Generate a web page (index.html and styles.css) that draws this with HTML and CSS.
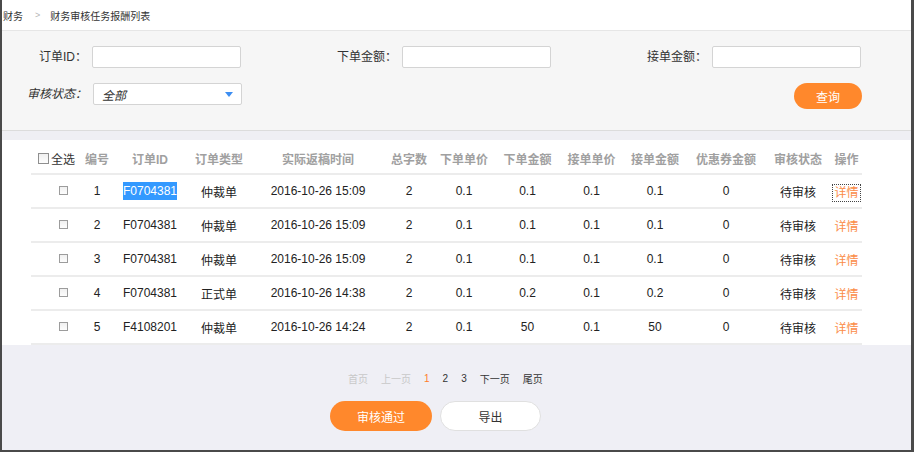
FILE: index.html
```html
<!DOCTYPE html>
<html lang="zh-CN">
<head>
<meta charset="utf-8">
<title>财务审核任务报酬列表</title>
<link rel="stylesheet" href="styles.css">
</head>
<body>
<div class="window">
  <div class="crumb">
    <span class="crumb-item">财务</span>
    <span class="crumb-sep">&gt;</span>
    <span class="crumb-item">财务审核任务报酬列表</span>
  </div>

  <div class="filter">
    <div class="field">
      <label class="label">订单ID：</label>
      <span class="input"></span>
    </div>
    <div class="field">
      <label class="label">下单金额：</label>
      <span class="input"></span>
    </div>
    <div class="field">
      <label class="label">接单金额：</label>
      <span class="input"></span>
    </div>
    <div class="field">
      <label class="label italic">审核状态：</label>
      <span class="select"><span class="select-text">全部</span><span class="caret"></span></span>
    </div>
    <div class="spacer"></div>
    <button class="btn-query">查询</button>
  </div>

  <div class="gap"></div>

  <div class="panel">
    <table class="grid">
      <colgroup>
        <col style="width:50px"><col style="width:32px"><col style="width:74px"><col style="width:64px">
        <col style="width:134px"><col style="width:48px"><col style="width:62px"><col style="width:65px">
        <col style="width:63px"><col style="width:64px"><col style="width:78px"><col style="width:66px"><col style="width:31px">
      </colgroup>
      <thead>
        <tr>
          <th class="all"><span class="cb cb-lg"></span><span class="all-text">全选</span></th>
          <th>编号</th><th>订单ID</th><th>订单类型</th><th>实际返稿时间</th><th>总字数</th>
          <th>下单单价</th><th>下单金额</th><th>接单单价</th><th>接单金额</th><th>优惠券金额</th><th>审核状态</th><th>操作</th>
        </tr>
      </thead>
      <tbody>
        <tr>
          <td class="cbcell"><span class="cb"></span></td><td>1</td><td><span class="sel">F0704381</span></td><td>仲裁单</td>
          <td>2016-10-26 15:09</td><td>2</td><td>0.1</td><td>0.1</td><td>0.1</td><td>0.1</td><td>0</td><td>待审核</td>
          <td><a class="detail focus">详情</a></td>
        </tr>
        <tr>
          <td class="cbcell"><span class="cb"></span></td><td>2</td><td>F0704381</td><td>仲裁单</td>
          <td>2016-10-26 15:09</td><td>2</td><td>0.1</td><td>0.1</td><td>0.1</td><td>0.1</td><td>0</td><td>待审核</td>
          <td><a class="detail">详情</a></td>
        </tr>
        <tr>
          <td class="cbcell"><span class="cb"></span></td><td>3</td><td>F0704381</td><td>仲裁单</td>
          <td>2016-10-26 15:09</td><td>2</td><td>0.1</td><td>0.1</td><td>0.1</td><td>0.1</td><td>0</td><td>待审核</td>
          <td><a class="detail">详情</a></td>
        </tr>
        <tr>
          <td class="cbcell"><span class="cb"></span></td><td>4</td><td>F0704381</td><td>正式单</td>
          <td>2016-10-26 14:38</td><td>2</td><td>0.1</td><td>0.2</td><td>0.1</td><td>0.2</td><td>0</td><td>待审核</td>
          <td><a class="detail">详情</a></td>
        </tr>
        <tr>
          <td class="cbcell"><span class="cb"></span></td><td>5</td><td>F4108201</td><td>仲裁单</td>
          <td>2016-10-26 14:24</td><td>2</td><td>0.1</td><td>50</td><td>0.1</td><td>50</td><td>0</td><td>待审核</td>
          <td><a class="detail">详情</a></td>
        </tr>
      </tbody>
    </table>
  </div>

  <div class="footer">
    <div class="pager">
      <span class="pg dim">首页</span>
      <span class="pg dim">上一页</span>
      <span class="pg cur">1</span>
      <span class="pg">2</span>
      <span class="pg">3</span>
      <span class="pg">下一页</span>
      <span class="pg">尾页</span>
    </div>
    <div class="actions">
      <button class="btn-pass">审核通过</button>
      <button class="btn-export">导出</button>
    </div>
  </div>
</div>
</body>
</html>
```

FILE: styles.css
```css
* { box-sizing: border-box; }
html, body { margin: 0; padding: 0; }
body {
  background: #4a4a4a;
  font-family: "Liberation Sans", "Noto Sans CJK SC", sans-serif;
  font-size: 12px;
  color: #333;
}
.window {
  width: 909px;
  height: 450px;
  margin-left: 2px;
  background: #efeff5;
  overflow: hidden;
}
.crumb {
  height: 31px;
  background: #fff;
  border-bottom: 1px solid #e6e6e6;
  display: flex;
  align-items: center;
  padding-left: 1px;
  font-size: 10px;
  color: #333;
}
.crumb-sep {
  color: #b5b5b5;
  font-size: 9px;
  margin: 0 10px 0 12px;
}
.filter {
  height: 100px;
  background: #f6f6f6;
  border-bottom: 1px solid #dcdcdc;
  padding-top: 15px;
  display: grid;
  grid-template-columns: 310px 310px 240px;
  grid-template-rows: 22px 26px;
  row-gap: 15px;
}
.field {
  display: flex;
  align-items: flex-start;
}
.label {
  width: 85px;
  text-align: right;
  line-height: 22px;
  margin-right: 5px;
  white-space: nowrap;
}
.italic { font-style: italic; }
.input {
  display: block;
  width: 149px;
  height: 22px;
  background: #fff;
  border: 1px solid #d4d4d4;
  border-radius: 2px;
}
.select {
  display: flex;
  align-items: center;
  justify-content: space-between;
  width: 149px;
  height: 22px;
  margin-left: 1px;
  background: #fff;
  border: 1px solid #d4d4d4;
  border-radius: 2px;
  padding: 0 8px 0 8px;
}
.select-text { font-style: italic; }
.caret {
  width: 0; height: 0;
  border-left: 4.5px solid transparent;
  border-right: 4.5px solid transparent;
  border-top: 5px solid #3c8ef2;
}
.btn-query {
  justify-self: end;
  width: 68px;
  height: 26px;
  border: none;
  border-radius: 13px;
  background: #ff882c;
  color: #fff;
  font: inherit;
  font-size: 12px;
  padding: 0;
}
.gap { height: 9px; background: #efeff4; }
.panel {
  background: #fff;
  padding: 4px 0 0 29px;
  height: 205px;
}
.grid {
  border-collapse: collapse;
  table-layout: fixed;
  width: 831px;
}
.grid th {
  height: 30px;
  padding: 0;
  font-weight: bold;
  color: #a0a0a0;
  text-align: center;
  vertical-align: middle;
  border-bottom: 2px solid #ececec;
  white-space: nowrap;
}
.grid td {
  height: 34px;
  padding: 0;
  text-align: center;
  vertical-align: middle;
  border-bottom: 2px solid #ececec;
  white-space: nowrap;
  color: #222;
}
.grid th.all {
  color: #333;
  font-weight: normal;
  text-align: left;
  padding-left: 7px;
}
.all-text { vertical-align: middle; }
.cb {
  display: inline-block;
  width: 9px;
  height: 9px;
  border: 1px solid #9c9c9c;
  background: linear-gradient(#f0f0f0, #fdfdfd);
  vertical-align: middle;
}
.cb-lg { width: 11px; height: 11px; margin-right: 2px; border-color: #8f8f8f; }
.grid td.cbcell { text-align: left; padding-left: 28px; }
.cbcell .cb { margin-top: -3px; }
.sel {
  background: #3399ff;
  color: #fff;
  padding: 2px 0;
}
.detail { color: #fb8c48; }
.focus { outline: 1px dotted #444; outline-offset: 1px; }
.footer {
  padding-top: 25px;
}
.pager {
  display: flex;
  gap: 13px;
  padding-left: 346px;
  height: 16px;
  align-items: center;
  font-size: 10px;
  color: #333;
}
.pg.dim { color: #c8c8c8; }
.pg.cur { color: #ff7d2a; }
.actions {
  margin-top: 15px;
  padding-left: 328px;
  display: flex;
  gap: 8px;
}
.btn-pass, .btn-export {
  height: 30px;
  border-radius: 15px;
  font: inherit;
  font-size: 12px;
  padding: 0;
}
.btn-pass {
  width: 102px;
  background: #ff882c;
  color: #fff;
  border: none;
}
.btn-export {
  width: 101px;
  background: #fff;
  color: #333;
  border: 1px solid #e0e0e0;
}
```
